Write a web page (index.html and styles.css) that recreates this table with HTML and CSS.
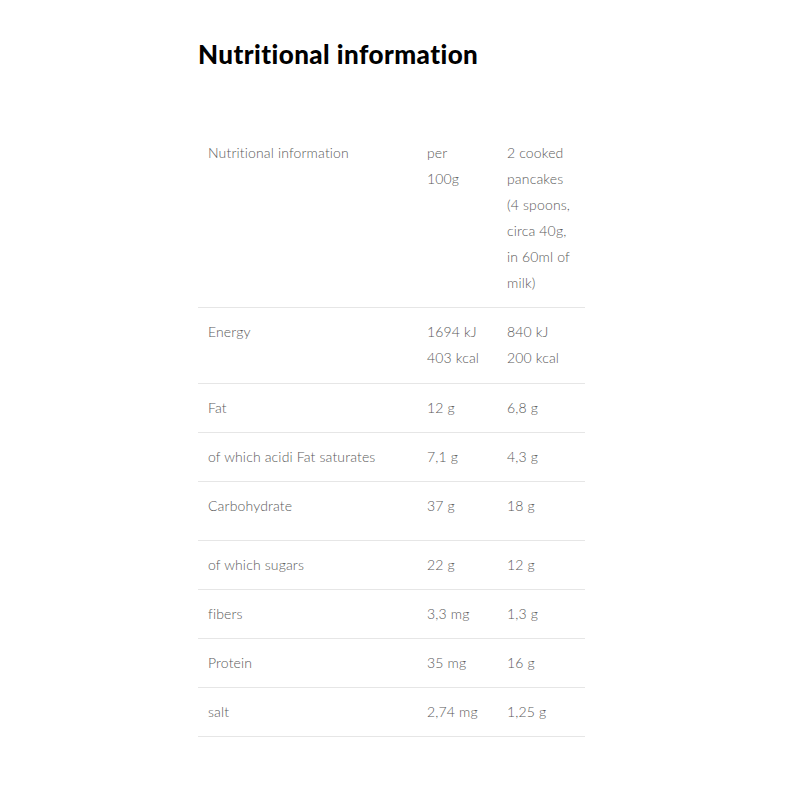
FILE: index.html
```html
<!DOCTYPE html>
<html>
<head>
<meta charset="utf-8">
<link rel="stylesheet" href="styles.css">
</head>
<body>
<div class="wrap">
  <h2 class="title">Nutritional information</h2>
  <table class="nutri">
    <tbody>
      <tr>
        <td class="c1">Nutritional information</td>
        <td class="c2">per 100g</td>
        <td class="c3">2 cooked pancakes (4 spoons, circa 40g, in 60ml of milk)</td>
      </tr>
      <tr class="energy">
        <td class="c1">Energy</td>
        <td class="c2">1694&nbsp;kJ<br>403&nbsp;kcal</td>
        <td class="c3">840 kJ<br>200 kcal</td>
      </tr>
      <tr>
        <td class="c1">Fat</td>
        <td class="c2">12 g</td>
        <td class="c3">6,8 g</td>
      </tr>
      <tr>
        <td class="c1">of which acidi Fat saturates</td>
        <td class="c2">7,1 g</td>
        <td class="c3">4,3 g</td>
      </tr>
      <tr class="tall">
        <td class="c1">Carbohydrate</td>
        <td class="c2">37 g</td>
        <td class="c3">18 g</td>
      </tr>
      <tr>
        <td class="c1">of which sugars</td>
        <td class="c2">22 g</td>
        <td class="c3">12 g</td>
      </tr>
      <tr>
        <td class="c1">fibers</td>
        <td class="c2">3,3 mg</td>
        <td class="c3">1,3 g</td>
      </tr>
      <tr>
        <td class="c1">Protein</td>
        <td class="c2">35 mg</td>
        <td class="c3">16 g</td>
      </tr>
      <tr>
        <td class="c1">salt</td>
        <td class="c2">2,74&nbsp;mg</td>
        <td class="c3">1,25 g</td>
      </tr>
    </tbody>
  </table>
</div>
</body>
</html>
```
FILE: styles.css
```css
html, body {
  margin: 0;
  padding: 0;
  background: #fff;
}
body {
  font-family: "Lato", "Liberation Sans", sans-serif;
}
.wrap {
  width: 387px;
  margin-left: 198px;
  padding-top: 38px;
}
.title {
  margin: 0 0 59px 0;
  font-size: 26px;
  line-height: 32px;
  font-weight: 900;
  color: #000;
  letter-spacing: 0.45px;
}
.nutri {
  width: 387px;
  border-collapse: collapse;
  table-layout: fixed;
  font-size: 14px;
  line-height: 26px;
  color: #5a5a5a;
  font-weight: 300;
  letter-spacing: 0.15px;
}
.nutri td {
  vertical-align: top;
  padding: 11px 10px 11px 10px;
  border-bottom: 1px solid #e6e6e6;
}
.nutri .c1 { width: 199px; }
.nutri .c2 { width: 52px; padding-right: 18px; }
.nutri .c3 { width: 68px; }
.nutri tr.energy td {
  padding-bottom: 12px;
}
.nutri tr.tall td {
  padding-bottom: 21px;
}
```
